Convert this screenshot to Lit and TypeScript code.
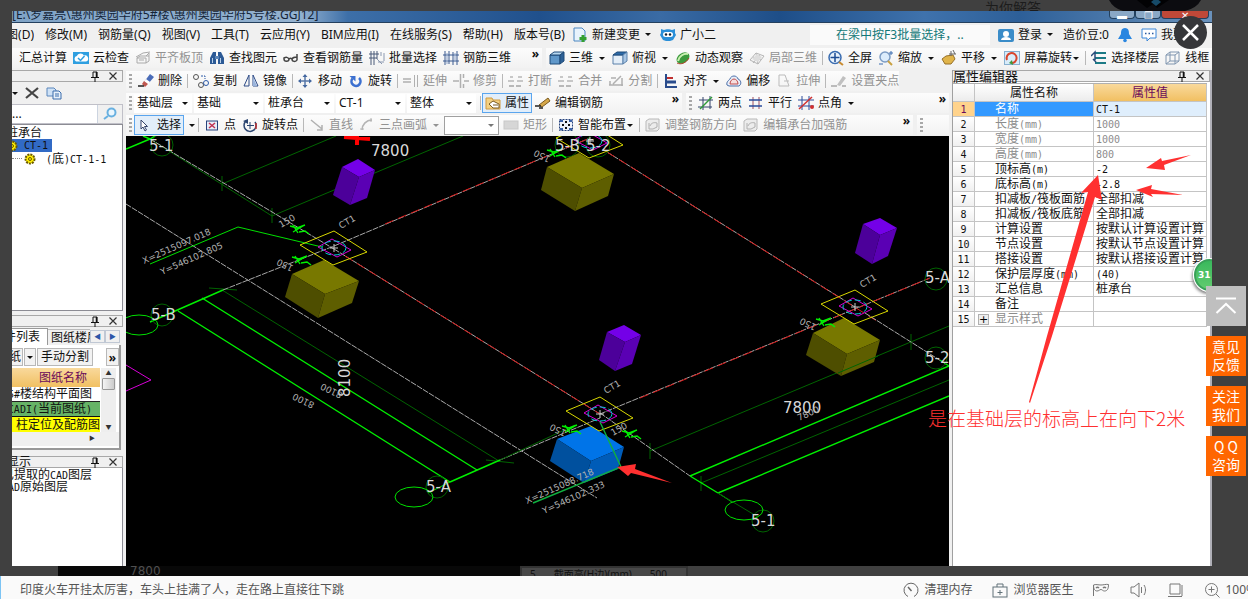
import { LitElement, html, svg, css } from "lit";
import { customElement } from "lit/decorators.js";
import { classMap } from "lit/directives/class-map.js";

const base = css`
  * { box-sizing: border-box; }
  button, select, input {
    font: inherit; color: inherit; margin: 0; padding: 0; border: 0;
    background: none; border-radius: 0; appearance: none; outline: none;
  }
  .mono { font-family: "DejaVu Sans Mono", "Liberation Mono", monospace; font-size: 10px; line-height: 0; }
  .ico { width: 16px; height: 16px; flex: none; display: block; fill: none; }
`;

/* Latin runs are set in a narrow monospace face, CJK runs stay in the UI face. */
const mixed = (t: string) =>
  t.split(/([\x20-\x7e]+)/).filter(Boolean).map((p) =>
    /^[\x20-\x7e]/.test(p) ? html`<span class="mono">${p}</span>` : p);

const glyphs: Record<string, unknown> = {
  cloudcheck: svg`<rect x="0" y="2" width="16" height="12" fill="#2f9fe0"/><path d="M3 11.500a3 3 0 0 1 .8-5.500 4 4 0 0 1 7.200-.500 3 3 0 0 1 2 6z" fill="#fff"/><path d="M5 8l2.500 2.500L11.500 6" stroke="#2f9fe0" stroke-width="1.500"/>`,
  level: svg`<path d="M1 7l7-4 7-1M2 13V8h9v5zM4 10h5M11 6l3-3v8l-3 2M2 8l3-2h9" stroke="#aaa"/>`,
  binoc: svg`<path d="M4 2h3v12H1V8zM9 2h3l3 6v6H9z" fill="#2c5a96"/><rect x="6" y="6" width="4" height="3" fill="#5d86b8"/><path d="M3.500 8v5M11.500 8v5" stroke="#b8d0ea"/>`,
  glasses: svg`<path d="M1 8c2-1 4-1 5 1 0 3-5 3-5 0zM9 9c1-2 3-2 5-2v3c-1 2-5 2-5-1zM6 9c1-1 2-1 3 0M14 7V4" stroke="#444" stroke-width="1.500"/>`,
  batch: svg`<path d="M2 1v14M5 1v14M8 1v8M0 4h10M0 8h8" stroke="#4a5a78"/><path d="M8 9l5 5M12 2v4M15 3v8M9 12h6" stroke="#8b98b0"/>`,
  rebar3d: svg`<path d="M2 1v14M6 1v13M10 2v13M14 1v14M0 5h16M0 11h16" stroke="#3a5a90"/><path d="M4 3v11M12 3v9" stroke="#8fa6cc"/>`,
  cube: svg`<path d="M1 5h10v9H1z" fill="#5f97c9" stroke="#1e4a78"/><path d="M1 5l4-3h10l-4 3z" fill="#b8d8f0" stroke="#1e4a78"/><path d="M11 5l4-3v9l-4 3z" fill="#2c6096" stroke="#1e4a78"/>`,
  cubetop: svg`<path d="M1 5h10v9H1z" fill="#e4eef8" stroke="#5a80aa"/><path d="M1 5l4-3h10l-4 3z" fill="#2c6aa8" stroke="#1e4a78"/><path d="M11 5l4-3v9l-4 3z" fill="#a8c6e4" stroke="#5a80aa"/>`,
  orbit: svg`<ellipse cx="8" cy="8" rx="7" ry="5" transform="rotate(-35 8 8)" fill="#3c9a3c"/><path d="M3 11C4 6 9 3 13 4" stroke="#c8f0b0" stroke-width="2"/><path d="M2 13c4 2 9 0 12-5" stroke="#b04028"/>`,
  orbitoff: svg`<path d="M1 10l6-7 8 3-6 8zM4 7l8 3M7 3l2 11M11 5l-7 8" stroke="#b5b5b5"/><path d="M3 9l5-5 5 3-4 5z" fill="#ddd"/>`,
  full: svg`<circle cx="7" cy="7.500" r="6" fill="#e8f2fc" stroke="#3a6cb0" stroke-width="1.500"/><path d="M7 3v9M2.500 7.500h9" stroke="#1d4c94" stroke-width="1.500"/><path d="M11 12l4 3" stroke="#c98b30" stroke-width="2"/>`,
  zoom: svg`<circle cx="7" cy="7" r="5" fill="#dcecfb" stroke="#7c9cc4" stroke-width="1.500"/><path d="M10 11l4 4" stroke="#c9a040" stroke-width="2"/><path d="M13 1v4M15 3h-4M1 14h4" stroke="#3a6cb0"/>`,
  hand: svg`<path d="M1 9l4-3 7-1 2 4-4 5H4z" fill="#e0b44a" stroke="#96702a"/><path d="M10 1v5M12 0l2 4M8 4h7" stroke="#666"/>`,
  spin: svg`<rect x=".5" y="1.500" width="15" height="13" fill="#d8ecfa" stroke="#88b0d0"/><path d="M3 10a5 5 0 1 1 4 3" stroke="#d8452c" stroke-width="2"/><path d="M8 10l-3 3 4 2z" fill="#3c9a3c"/>`,
  floors: svg`<path d="M4 3h11M4 8h11M4 13h11" stroke="#1c7a86" stroke-width="2"/><path d="M0 6l4-4v8M2 9l3 3" stroke="#2a4c7c" stroke-width="1.500"/>`,
  wire: svg`<path d="M1 5h9v9H1zM1 5l4-3h9l-4 3M10 14l4-3V2M5 2v9h9M5 11l-4 3" stroke="#8096b0"/>`,
  eraser: svg`<path d="M6 9l6-8 4 3-6 7z" fill="#4a6cb8"/><path d="M6 9l2-3 4 3-2 3z" fill="#fff"/><path d="M4 11l2-3 4 3-3 3z" fill="#c05850"/><path d="M0 13h6" stroke="#222" stroke-width="1.500"/>`,
  copy: svg`<circle cx="3" cy="4" r="2.500" stroke="#555"/><circle cx="8" cy="12" r="2.500" stroke="#555"/><circle cx="13" cy="10" r="2.500" stroke="#2c5aa8"/><path d="M8 3h4v3" stroke="#2c5aa8" stroke-dasharray="2 1"/>`,
  mirror: svg`<path d="M6 2v11H1zM10 2v11h5z" stroke="#2c4a86"/><path d="M10 4v9h4z" fill="#9ab4dc"/>`,
  move: svg`<path d="M7 2v12M1 8h12" stroke="#5878a8" stroke-width="1.500"/><path d="M7 1l2.500 3h-5zM7 15l2.500-3h-5zM0 8l3-2.500v5zM14 8l-3-2.500v5z" fill="#4468a0"/>`,
  rotate: svg`<path d="M4.500 5.500a4.500 4.500 0 1 0 6.500-.500" stroke="#3c70d0" stroke-width="2.600"/><path d="M1.500 3h6v5.500z" fill="#3c70d0"/>`,
  extend: svg`<path d="M0 6h8M0 9h8" stroke="#b0b0b0" stroke-width="1.500"/><path d="M11.500 2v12M14.500 2v12" stroke="#b0b0b0"/>`,
  trim: svg`<path d="M0 8h6M11 8h5M7.500 1v14M10.500 1v4M10.500 11v4" stroke="#b0b0b0" stroke-width="1.500"/>`,
  brk: svg`<path d="M2 4h3M10 4h4M0 8h6M9 8h6" stroke="#b8b8b8" stroke-width="1.500"/><path d="M1 13h14" stroke="#b8b8b8" stroke-width="2" stroke-dasharray="5 2"/>`,
  split: svg`<path d="M1 12h14M2 12V8M14 5v8M3 5h5M5 11l8-8" stroke="#b0b0b0" stroke-width="1.500"/>`,
  align: svg`<path d="M3 1v14M3 14h11" stroke="#2a4c8c" stroke-width="2"/><path d="M4 5h6" stroke="#c03030" stroke-width="2"/><path d="M4 9h9" stroke="#2a4c8c" stroke-width="3"/>`,
  offset: svg`<path d="M1 12c-1-3 2-5 3-6 1-4 7-4 8 0 3 1 4 5 1 7H3z" stroke="#4a6ea8" fill="#e8eef8"/><path d="M4 11c0-3 2-5 4-5s4 2 4 5z" stroke="#c04a4a" fill="#f6dede"/>`,
  stretch: svg`<path d="M3 2h6l4 11H3zM8 8h5" stroke="#bbb"/>`,
  grip: svg`<path d="M0 13h6M11 13h4" stroke="#bbb" stroke-width="2"/><path d="M6 12l6-9 3 2-6 8z" fill="#c0c0c0"/>`,
  props: svg`<path d="M1 3h6l1 2h7v9H1z" fill="#f4d080" stroke="#d09a40"/><path d="M4 9l4-3 6 3v4H8z" fill="#fff" stroke="#7a5a20"/><path d="M8 10h5" stroke="#7a5a20"/>`,
  pencil: svg`<path d="M4 10l9-7 2 3-8 6z" fill="#d6a84a" stroke="#7a5a20"/><path d="M0 11h6M4 13h4" stroke="#222" stroke-width="1.500"/>`,
  twopt: svg`<path d="M5 2v13M12 1v13M1 5h14M0 12h14" stroke="#34456c"/><path d="M2 14L14 2" stroke="#2f9a3a" stroke-width="1.500"/>`,
  para: svg`<path d="M5 2v12M11 2v12" stroke="#a05060"/><path d="M1 5h13M1 11h13" stroke="#2a4c9c" stroke-width="1.500"/>`,
  ptang: svg`<path d="M4 1v14M11 1v14M0 5h16M0 11h16" stroke="#2a4c9c"/><path d="M1 14L14 2" stroke="#d03030" stroke-width="1.500"/><circle cx="14" cy="12" r="2" fill="#d03030"/>`,
  cursor: svg`<path d="M4 3v9l2-2 2 4 1.500-1-2-3.500h3z" fill="#fff" stroke="#34456c"/>`,
  point: svg`<rect x="2.500" y="4" width="11" height="9" stroke="#26427c" fill="#e8ecf8"/><path d="M5 6l6 5M11 6l-6 5" stroke="#c03050" stroke-width="1.500"/>`,
  rotpt: svg`<path d="M4 4a6 6 0 1 0 9 1" stroke="#2a4470" stroke-width="1.500"/><path d="M8 5v7M5 8.500h7" stroke="#2a4470"/><path d="M1 4l5-2v5z" fill="#2a4470"/><path d="M14 6v6" stroke="#c03030" stroke-width="1.500"/>`,
  line: svg`<path d="M2 3l11 9M13 8v5H8" stroke="#b0b0b0" stroke-width="1.500"/>`,
  arc: svg`<path d="M3 13C3 8 7 3 13 3" stroke="#b4b4b4" stroke-width="1.500"/><path d="M1 12h4M12 1v4" stroke="#b4b4b4"/>`,
  rect: svg`<rect x="1" y="4" width="14" height="8" fill="#d6d6d6" stroke="#c8c8c8"/>`,
  smart: svg`<rect x="1.500" y="2.500" width="13" height="11" stroke="#26427c" stroke-dasharray="2 1" fill="#eef2fa"/><path d="M8 4v2M8 10v2M4 8h2M10 8h2" stroke="#111" stroke-width="2"/><path d="M2 3h3v2H2zM11 3h3v2h-3zM2 11h3v2H2zM11 11h3v2h-3z" fill="#3a62a8"/>`,
  adj: svg`<path d="M1 4l3-2h10v10l-2 2H1z" stroke="#b8b8b8" fill="#ececec"/><path d="M4 6v6h4M5 9c1-3 4-4 7-3v4l-4 2" stroke="#b0b0b0"/>`,
  newdoc: svg`<path d="M2 1h8l3 3v10H2z" fill="#e8f3fc" stroke="#4a86c0"/><path d="M11 8v7M7.500 11.500h7" stroke="#34a030" stroke-width="3"/>`,
  robot: svg`<path d="M1 6V2l3 1c2-1 6-1 8 0l3-1v4l1 2-3 5-3 1H6l-3-1L0 8z" fill="#2a8fd8"/><rect x="3" y="5" width="10" height="5" rx="2.500" fill="#fff"/><circle cx="6" cy="7.500" r="1.200" fill="#123"/><circle cx="10" cy="7.500" r="1.200" fill="#123"/>`,
  user: svg`<rect x="0" y="2" width="16" height="13" rx="2" fill="#3a8cc8"/><circle cx="8" cy="7" r="3" fill="#fff"/><path d="M3 13c0-4 10-4 10 0z" fill="#fff"/>`,
  bell: svg`<path d="M8 1c4 0 4 4 4 6l3 5H1l3-5c0-2 0-6 4-6z" fill="#2a86e0"/><circle cx="8" cy="13.500" r="1.800" fill="#2a86e0"/>`,
  chat: svg`<path d="M1 2h14v9H9l-3 3v-3H1z" stroke="#3a86d8" fill="#fff"/><path d="M4 6.500h1.500M7.500 6.500h1.500M11 6.500h1.500" stroke="#2a5aa0" stroke-width="1.500"/>`,
  del: svg`<path d="M2 3l12 10M14 3L2 13" stroke="#444" stroke-width="2.200"/>`,
  docs: svg`<path d="M1 3h7l2 2v6H1z" fill="#cfe2f6" stroke="#5a86bc"/><path d="M7 6h6l2 2v6H7z" fill="#e6f0fa" stroke="#3a6cac"/><path d="M9 9h4M9 11h4" stroke="#3a6cac"/>`,
  lens: svg`<circle cx="9.500" cy="6.500" r="4" stroke="#68b0e0" stroke-width="2" fill="#eaf6fe"/><path d="M6 10l-4 3" stroke="#68b0e0" stroke-width="2"/>`,
  gear: svg`<circle cx="8" cy="8" r="4.500" fill="#ffee00" stroke="#6a5a00" stroke-width="2" stroke-dasharray="2 1"/><circle cx="8" cy="8" r="1.500" stroke="#6a5a00"/>`,
  pin: svg`<path d="M6 4h4v5M6 4v5M4 9.500h8M8 10v4" stroke="#111"/><path d="M9.500 4v5" stroke="#111" stroke-width="1.500"/>`,
  shut: svg`<path d="M4.500 4.500l7 7M11.500 4.500l-7 7" stroke="#333" stroke-width="1.200"/>`,
  gauge: svg`<path d="M5 14.500A7 7 0 1 1 11 14.500" stroke="#666"/><path d="M5 5l3.500 4" stroke="#666" stroke-width="1.500"/>`,
  kit: svg`<rect x="1" y="5" width="14" height="10" stroke="#607078"/><path d="M5 5V2h6v3M8 8v5M5.500 10.500h5" stroke="#607078"/>`,
  mask: svg`<path d="M.5 14V3c2-1 5 0 7.500 0s5-1 7.500-.500c0 4-1 6.500-4 6.500-2 0-2-1.500-3.500-1.500S6 9 4 9C2 9 .5 7 .5 3" stroke="#777"/><path d="M3 6c1-1 2-1 3 0M10 6c1-1 2-1 3 0" stroke="#777" stroke-width="1.500"/>`,
  sound: svg`<path d="M1 5h3l5-4v14l-5-4H1zM11.500 5v6M14 3c2 3 2 7 0 10" stroke="#777"/>`,
  screen: svg`<path d="M3 2h10v10H3zM1 14.500h14M15 3v11" stroke="#777"/>`,
  plus: svg`<circle cx="7.500" cy="7.500" r="6" stroke="#777"/><path d="M7.500 4.500v6M4.500 7.500h6M12 12l3.500 3.500" stroke="#777"/>`,
};

const icon = (n: string) => html`<svg class="ico" viewBox="0 0 16 16" aria-hidden="true">${glyphs[n]}</svg>`;

type Opt = { off?: boolean; drop?: boolean; on?: boolean; tight?: boolean; name?: string };
const tool = (i: string, label: string, o: Opt = {}) => html`
  <button class=${classMap({ tool: true, off: !!o.off, on: !!o.on, tight: !!o.tight })} ?disabled=${o.off} aria-label=${label || o.name || ""}>
    ${i ? icon(i) : ""}${label ? html`<span>${label}</span>` : ""}${o.drop ? html`<i class="tri"></i>` : ""}
  </button>`;
const sep = html`<i class="sep"></i>`;
const grip = html`<i class="grip"></i>`;
const more = html`<button class="more" aria-label="更多">»</button>`;
const combo = (v: string, cls = "") => html`
  <label class="combo ${cls}"><select aria-label=${v || "图元"}><option>${v}</option></select></label>`;
const caption = (t: string) => html`
  <header class="cap"><span class="captext">${t}</span>
    <button aria-label="固定">${icon("pin")}</button><button aria-label="关闭">${icon("shut")}</button></header>`;

const capCss = css`
  .cap { display: flex; align-items: center; justify-content: flex-end; height: 12px; gap: 2px; border: 1px solid #a8a8a8; border-left: 0; background: #f0f0f0; padding-right: 1px; line-height: 12px; white-space: nowrap; }
  .captext { flex: 1; }
`;

type P = [number, number];
const pts = (a: P[]) => a.map((p) => p.join(",")).join(" ");

@customElement("cad-scene")
export class CadScene extends LitElement {
  static styles = [base, css`
    :host { display: block; flex: 1; min-height: 0; background: #000; overflow: hidden; }
    .scene { display: block; width: 100%; height: 100%; fill: none; }
    .g { stroke: #00f000; stroke-width: 1.400; }
    .t { stroke: #00e000; }
    .d { stroke: #006400; }
    .w { stroke: #a8a8a8; stroke-dasharray: 6 1; }
    .r { stroke: #d81818; stroke-dasharray: 9 5; }
    .y { stroke: #d8d800; }
    .m { stroke: #d800d8; }
    .c { stroke: #00d0d8; stroke-dasharray: 6 3; }
    .lab { font: 15px "DejaVu Sans", sans-serif; fill: #d8d8d8; }
    .sm { font: 9px "DejaVu Sans", sans-serif; fill: #b0b0b0; }
  `];
  box(a: P, b: P, c: P, d: P, e: P, f: P, g: P, k: string[]) {
    return svg`<polygon points=${pts([a, b, c, d])} fill=${k[0]}/><polygon points=${pts([a, d, f, e])} fill=${k[1]}/><polygon points=${pts([d, c, g, f])} fill=${k[2]}/>`;
  }
  node(x: number, y: number) {
    return svg`<g transform="translate(${x} ${y})"><path class="y" d="M-34-3L0-17 33 4-1 17z"/><path class="m" d="M-16-1L-2-9 17 2 3 9z"/><ellipse class="c" cx="0" cy="0" rx="12" ry="7"/><path d="M-4 0h8M0-4v8" stroke="#ccc"/></g>`;
  }
  tick(x: number, y: number) {
    return svg`<path class="g" transform="translate(${x} ${y})" d="M-8-3l7 2 8-3M-5-4l5 8M-5 3l10-6M1 3l6-1 4 3"/>`;
  }
  render() {
    const ol = ["#787800", "#4e4e00", "#5e5e00"];
    const pu = ["#7400e8", "#4c009a", "#5a00b4"];
    return html`<svg class="scene" viewBox="126 136 823 430" preserveAspectRatio="xMidYMid slice" role="img" aria-label="三维视图">
      <path class="d" d="M222 184L336 136M222 176v15M272 216L463 136M272 208v15M222 290L499 461M209 288l28 2M486 460l28 3M650 451L949 326M650 443v16M701 483L949 380M701 476v15M911 334v16M150 139L272 216"/>
      <path class="w" d="M150 139L334 249M126 204L597 498M223 290L334 246M500 460L600 418M600 413L690 476M334 246L590 138M334 249L600 414M600 414L930 278M607 152L855 307"/>
      <path class="r" d="M385 224L590 138M345 256L600 414M640 398L930 278M607 152L880 323"/>
      <path class="w" d="M865 313L949 366"/>
      <path class="g" d="M126 149l24-10 5-3M143 136l7 3M150 322L223 290M178 311L450 482M202 298L477 470M450 482L500 460M690 476L949 366M718 493L949 396M690 476l28 17M940 360l9 6"/>
      <path class="t" d="M428 493l22-11M718 493l14 9M150 264l88-37 84 20"/>
      <path class="d" d="M718 493l40 24M500 460l75-35"/>
      <g class="d"><circle cx="162" cy="145" r="11"/><circle cx="162" cy="315" r="11"/><circle cx="437" cy="487" r="11"/><circle cx="763" cy="521" r="11"/><circle cx="936" cy="279" r="11"/><circle cx="936" cy="358" r="11"/><circle cx="567" cy="145" r="12"/><circle cx="598" cy="145" r="12"/></g>
      <g class="t"><ellipse cx="139" cy="325" rx="19" ry="10"/><ellipse cx="414" cy="497" rx="19" ry="10"/><ellipse cx="744" cy="510" rx="19" ry="10"/></g>
      <path class="m" d="M126 365l25 15-25 11"/>
      <path d="M344 137l26 2M357 136v9" stroke="#f00" stroke-width="4"/>
      ${this.box([342, 167], [358, 159], [375, 170], [359, 177], [333, 195], [350, 205], [367, 198], pu)}
      ${this.box([863, 224], [880, 218], [897, 228], [880, 235], [855, 253], [872, 264], [888, 256], pu)}
      ${this.box([607, 332], [624, 325], [641, 335], [625, 342], [599, 360], [615, 371], [632, 364], pu)}
      ${this.box([292, 274], [324, 260], [359, 281], [325, 294], [285, 297], [318, 318], [352, 303], ol)}
      ${this.box([547, 167], [579, 153], [614, 174], [582, 188], [541, 190], [575, 211], [608, 196], ol)}
      ${this.box([813, 333], [844, 318], [880, 340], [847, 354], [806, 355], [841, 376], [874, 362], ol)}
      ${this.box([557, 439], [591, 426], [624, 447], [591, 461], [550, 461], [584, 483], [618, 469], ["#0074e8", "#00509e", "#005cb8"])}
      <path class="d" d="M838 373l40-17"/>
      ${this.node(334, 248)}${this.node(590, 141)}${this.node(600, 414)}${this.node(855, 307)}
      ${this.tick(298, 229)}${this.tick(300, 260)}${this.tick(555, 153)}${this.tick(824, 322)}${this.tick(570, 429)}${this.tick(630, 434)}
      <path d="M600 422l21 45-88 36" stroke="#10b040" stroke-width="1.400"/>
      <g class="lab">
        <text x="149" y="151">5-1</text><text x="151" y="320">5-B</text><text x="426" y="492">5-A</text><text x="751" y="526">5-1</text>
        <text x="925" y="283">5-A</text><text x="925" y="363">5-2</text><text x="555" y="151">5-B</text><text x="586" y="151">5-2</text>
        <text x="371" y="156">7800</text><text x="783" y="413">7800</text><text transform="translate(350 397) rotate(-90)">8100</text>
      </g>
      <g class="sm">
        <text transform="translate(144 264) rotate(-24)">X=2515097.018</text><text transform="translate(162 275) rotate(-24)">Y=546102.805</text>
        <text transform="translate(527 504) rotate(-24)">X=2515088.718</text><text transform="translate(544 514) rotate(-24)">Y=546102.333</text>
        <text transform="translate(341 229) rotate(-30)">CT1</text><text transform="translate(606 394) rotate(-30)">CT1</text><text transform="translate(862 288) rotate(-30)">CT1</text>
        <text transform="translate(281 228) rotate(-30)">150</text><text transform="translate(294 266) rotate(206)">150</text><text transform="translate(551 157) rotate(206)">150</text>
        <text transform="translate(817 325) rotate(206)">150</text><text transform="translate(567 431) rotate(206)">150</text><text transform="translate(613 436) rotate(-30)">150</text>
        <text transform="translate(799 421) rotate(-24)">7800</text><text transform="translate(343 393) rotate(206)">8100</text><text transform="translate(315 403) rotate(206)">8100</text>
      </g>
    </svg>`;
  }
}

const rows: [string, string, boolean][] = [
  ["名称", "CT-1", false], ["长度(mm)", "1000", true], ["宽度(mm)", "1000", true], ["高度(mm)", "800", true],
  ["顶标高(m)", "-2", false], ["底标高(m)", "-2.8", false], ["扣减板/筏板面筋", "全部扣减", false], ["扣减板/筏板底筋", "全部扣减", false],
  ["计算设置", "按默认计算设置计算", false], ["节点设置", "按默认节点设置计算", false], ["搭接设置", "按默认搭接设置计算", false],
  ["保护层厚度(mm)", "(40)", false], ["汇总信息", "桩承台", false], ["备注", "", false], ["显示样式", "", true],
];

@customElement("property-editor")
export class PropertyEditor extends LitElement {
  static styles = [base, capCss, css`
    :host { display: block; background: #fff; border-left: 1px solid #a0a0a0; border-right: 2px solid #b0b0b8; overflow: hidden; }
    .captext { font-size: 13px; }
    .grid { width: 100%; border-collapse: separate; border-spacing: 0; table-layout: fixed; border-top: 1px solid #b0b0b0; }
    .grid th, .grid td { height: 15px; padding: 0; line-height: 14px; font-weight: 400; border-right: 1px solid #c4c4c4; border-bottom: 1px solid #c4c4c4; overflow: hidden; white-space: nowrap; text-align: left; }
    .grid thead th { height: 18px; line-height: 17px; text-align: center; background: linear-gradient(#fff, #ececec); }
    .grid thead .hot { background: linear-gradient(#f9d99c, #f1c062); color: #6a0a5a; }
    .grid .no { text-align: center; background: linear-gradient(#fff, #f0f0f0); }
    .grid td.name { padding-left: 20px; }
    .grid td.val { padding-left: 2px; }
    .dim .name, .dim .val { color: #8c8c8c; }
    .grid .sel .no { background: #ffd38c; color: #6a0a5a; }
    .sel .name { background: #3399ff; color: #fff; }
    .sel .val { background: #dfeefc; }
    .exp { position: absolute; margin: 2px 0 0 -17px; width: 11px; height: 11px; border: 1px solid #b0b0b0; background: #eee; font: 11px/8px "DejaVu Sans", sans-serif; color: #000; }
    .c1 { width: 22px; } .c2 { width: 119px; }
    .wrap { padding: 1px 3px 0 0; }
  `];
  render() {
    return html`${caption("属性编辑器")}
      <div class="wrap"><table class="grid">
        <colgroup><col class="c1" /><col class="c2" /><col /></colgroup>
        <thead><tr><th></th><th>属性名称</th><th class="hot">属性值</th></tr></thead>
        <tbody>${rows.map(([n, v, dim], i) => html`<tr class=${classMap({ dim, sel: i === 0 })}>
          <th class="no" scope="row">${mixed(String(i + 1))}</th>
          <td class="name">${i === 14 ? html`<button class="exp" aria-label="展开">+</button>` : ""}${mixed(n)}</td>
          <td class="val">${mixed(v)}</td></tr>`)}</tbody>
      </table></div>`;
  }
}

@customElement("app-root")
export class AppRoot extends LitElement {
  static styles = [base, capCss, css`
    :host { display: flex; flex-direction: column; height: 100vh; overflow: hidden; font: 12px/16px "Noto Sans", "Noto Sans CJK SC", sans-serif; color: #111; background: #404040; position: relative; }
    .stage { flex: 1; min-height: 0; display: flex; flex-direction: column; padding: 0 36px 0 12px; }
    .behind { height: 11px; display: flex; justify-content: flex-end; gap: 68px; padding-right: 11px; overflow: hidden; color: #1c1c1c; font-size: 14px; line-height: 16px; }
    .figure { width: 92px; height: 11px; display: block; }
    .under { height: 10px; display: flex; overflow: hidden; margin-right: -36px; }
    .under .cadstrip { margin-left: 46px; flex: 0 0 462px; background: #080808; color: #505050; font: 12px/10px "DejaVu Sans", sans-serif; padding-left: 72px; }
    .under .rowstrip { flex: 0 0 168px; display: flex; gap: 18px; padding-left: 8px; border: 2px solid #333; border-bottom: 0; background: #484848; color: #111; font-size: 10px; line-height: 12px; white-space: nowrap; overflow: hidden; }
    .shot { flex: 1; min-height: 0; display: flex; flex-direction: column; background: #f0f0f0; position: relative; overflow: hidden; }

    .title { flex: none; height: 12px; display: flex; align-items: flex-end; white-space: nowrap; overflow: hidden; color: #142438; line-height: 14px;
      background: linear-gradient(90deg, #7fa3c6 0, #94b2d0 24%, #3d6fa8 28%, #20508c 44%, #3a6ba4 54%, #1e4e88 64%, #3f72ac 76%, #2d5f98 84%, #6a92bc 100%); border-bottom: 1px solid #24405e; }
    .title h1 { margin: 0; font: inherit; flex: 1; }
    .wb { align-self: flex-start; height: 8px; width: 26px; border: 1px solid #22405e; border-top: 0; border-radius: 0 0 4px 4px; background: #8aa8c6; color: #fff; font-size: 10px; line-height: 4px; }
    .wb.red { width: 48px; background: #c04838; margin-right: 3px; }

    .menu { flex: none; height: 23px; display: flex; align-items: center; gap: 11px; white-space: nowrap; overflow: hidden; background: #f0f0f0; }
    .menu .first { width: 22px; display: flex; justify-content: flex-end; overflow: hidden; }
    .menu > .tool { margin-left: -4px; }
    .hint { margin-left: auto; width: 180px; height: 20px; line-height: 20px; text-align: center; background: #fafafa; color: #127878; }
    .acct { display: flex; gap: 8px; padding-right: 15px; margin-left: -3px; }

    .bar { flex: none; display: flex; align-items: center; height: 22px; white-space: nowrap; overflow: hidden; }
    .bar.top { height: 24px; }
    .group { display: flex; align-items: center; gap: 6px; height: 20px; background: linear-gradient(#fcfcfc, #f2f2f2); padding-left: 3px; margin-right: 4px; }
    .grow { flex: 0 0 530px; padding-left: 7px; }
    .tool { display: flex; align-items: center; gap: 4px; height: 20px; flex: none; white-space: nowrap; }
    .tool.off { color: #929292; }
    .tool.on { border: 1px solid #5aa5ee; background: #e2eefa; padding: 0 2px; margin: 0 -3px 0 -4px; }
    .tri { width: 9px; display: flex; justify-content: center; }
    .tri::after, .combo::after { content: ""; border: 3px solid transparent; border-top-color: currentColor; border-bottom: 0; }
    .tight .tri { margin-left: -5px; }
    .group > .tri { margin-right: -3px; }
    .sep { width: 1px; height: 14px; background: #b8b8b8; margin: 0 -1px; flex: none; }
    .grip { width: 3px; height: 14px; background: repeating-linear-gradient(#a8a8a8 0 2px, transparent 2px 4px); flex: none; }
    .more { font: bold 12px/12px "Noto Sans", sans-serif; align-self: flex-start; margin-left: auto; padding-right: 3px; }
    .combo { display: grid; align-items: center; width: 69px; height: 19px; background: #fff; flex: none; margin-right: -4px; }
    .combo > select, .combo::after { grid-area: 1 / 1; }
    .combo > select { width: 100%; padding-left: 3px; }
    .combo::after { justify-self: end; margin-right: 4px; }
    .combo.short { width: 58px; margin-left: -4px; }
    .combo.last { margin-right: -1px; }
    .combo.boxed { width: 55px; border: 1px solid #a0a0a0; color: #777; margin: 0 -2px; }
    .w550 { flex: 0 0 556px; }
    .w788 { flex: 0 0 787px; }
    .fill { flex: 1; margin-right: 0; }

    .body { flex: 1; min-height: 0; display: grid; grid-template-columns: 111px minmax(0, 1fr) 260px; column-gap: 3px; }
    .mid { display: flex; flex-direction: column; min-width: 0; min-height: 0; }
    .left { display: flex; flex-direction: column; min-width: 0; min-height: 0; overflow: hidden; }
    .mini { display: flex; align-items: center; gap: 6px; height: 22px; flex: none; }
    .mini .tri { width: 6px; }
    .search { display: flex; height: 20px; flex: none; border: 1px solid #c0c0c8; border-width: 1px 1px 1px 0; }
    .search input { flex: 1; min-width: 0; background: #fff; border-right: 1px solid #ccd4e0; }
    .search button { width: 24px; padding-left: 4px; }
    .tree { list-style: none; margin: 0 0 4px; padding: 1px 0; height: 187px; flex: none; background: #fff; border: 1px solid #8c8c94; border-left: 0; white-space: nowrap; overflow: hidden; }
    .tree li { height: 13px; line-height: 13px; display: flex; align-items: center; }
    .tree .root { margin-left: -6px; }
    .tree .sel { width: 41px; background: #316ac5; margin-left: -1px; gap: 4px; }
    .tree .sel .ico { margin-left: -7px; }
    .tree .leaf { gap: 8px; }
    .tree .leaf::before { content: ""; width: 10px; border-top: 1px dotted #888; margin-right: -8px; }
    .tabs { display: flex; height: 18px; flex: none; align-items: flex-end; white-space: nowrap; }
    .tabs button { height: 16px; line-height: 15px; overflow: hidden; display: flex; }
    .tabs .cur { width: 36px; height: 17px; justify-content: flex-end; padding-right: 7px; background: #fff; border: 1px solid #999; border-width: 1px 1px 0 0; }
    .tabs .next { width: 42px; padding-left: 3px; border-top: 1px solid #bbb; }
    .tabs .nav { width: 15px; height: 13px; line-height: 11px; font-size: 7px; color: #2c56a8; border: 1px solid #c0c8d4; justify-content: center; margin-bottom: 2px; }
    .sheet { border: 1px solid #999; border-width: 0 2px 2px 0; margin: 0 2px 6px 0; height: 105px; flex: none; background: #fff; overflow: hidden; }
    .btns { display: flex; height: 22px; gap: 1px; padding: 3px 0 0; white-space: nowrap; }
    .btns button { height: 18px; border: 1px solid #b8b8b8; background: #f2f2f2; padding: 0 3px; line-height: 16px; }
    .btns .cut { width: 11px; display: flex; justify-content: flex-end; overflow: hidden; border-left: 0; padding: 0 1px 0 0; }
    .btns .pull { padding: 0 1px; width: 12px; }
    .btns .tri { width: 8px; }
    .btns .more { margin-left: auto; height: 18px; line-height: 9px; padding: 0 2px; }
    .list { display: flex; margin-top: 1px; }
    .dwg { width: 88px; border-spacing: 0; table-layout: fixed; }
    .dwg th, .dwg td { padding: 0; height: 15px; line-height: 14px; overflow: hidden; white-space: nowrap; border-bottom: 1px solid #222; }
    .dwg th { height: 19px; font-weight: 400; color: #6a0a5a; background: linear-gradient(#f9d99c, #f1c062); padding-left: 14px; border: 0; }
    .dwg div { display: flex; justify-content: flex-end; padding-right: 8px; }
    .dwg .grn { background: #66b366; border-color: #111; }
    .dwg .yel { background: #ffff00; border: 0; }
    .dwg .yel div { padding: 0; }
    .scroll { width: 15px; margin-left: 1px; background: #eee; display: flex; flex-direction: column; align-items: center; font-size: 6px; line-height: 10px; color: #333; }
    .thumb { width: 13px; height: 12px; background: linear-gradient(90deg, #f4f4f4, #ccc); border: 1px solid #999; border-radius: 1px; }
    .scroll .dn { margin-top: auto; }
    .hs { height: 14px; background: #f0f0f0; font-size: 6px; line-height: 12px; padding-left: 77px; color: #333; }
    .layers { flex: 1; min-height: 0; margin: 0; padding: 1px 0; list-style: none; background: #fff; border-right: 1px solid #8c8c94; white-space: nowrap; overflow: hidden; line-height: 12px; }
    .layers li { margin-left: -10px; }
    .show .captext { margin-left: -5px; }

    .notes { position: absolute; inset: 0; width: 100%; height: 100%; pointer-events: none; fill: #ff3030; }
    .notetext { font: 300 19px "Noto Sans CJK SC", sans-serif; }
    .badge { position: absolute; right: -14px; top: 247px; width: 33px; height: 34px; border-radius: 50%; border: 2px solid #fff; background: linear-gradient(#38b85c, #64cc70); outline: 2px solid #38a058; outline-offset: -3px; color: #fff; font: bold 9px/30px "DejaVu Sans", sans-serif; text-align: left; padding-left: 3px; box-shadow: -1px 2px 3px #888; }
    .close { position: absolute; right: 41px; top: 16px; width: 33px; height: 33px; border-radius: 50%; background: #36373a; }
    .close svg { display: block; width: 33px; height: 33px; fill: none; }
    .side { position: absolute; right: 2px; top: 286px; display: flex; flex-direction: column; gap: 10px; }
    .side a { width: 40px; height: 40px; background: #ff6600; color: #fff; font: 14px/18px "Noto Sans CJK SC", sans-serif; text-align: center; padding: 1px 4px; text-decoration: none; }
    .side .up { background: #bfbfbf; padding: 0; }
    .side svg { display: block; width: 40px; height: 40px; fill: none; }

    .foot { flex: none; height: 23px; background: #fafafa; color: #555; display: flex; align-items: center; overflow: hidden; white-space: nowrap; padding-top: 4px; border-left: 1px solid #7cc4f4; }
    .foot a { color: inherit; text-decoration: none; margin-left: 19px; margin-right: auto; }
    .foot nav { display: flex; gap: 20px; margin-right: -8px; }
    .foot button { display: flex; align-items: center; gap: 4px; }
    .foot .ico { margin-right: 1px; }
  `];

  render() {
    const off = { off: true };
    return html`
    <main class="stage">
      <div class="behind"><span>为你解答</span>
        <svg class="figure" viewBox="0 0 92 11"><path d="M0 0h92q-4 8-16 11H14Q4 8 0 0z" fill="#0c0c10"/><path d="M28 0l10 8 6-4 4 4 12-8z" fill="#020204"/><path d="M42 2l5-4 5 4-5 4z" fill="#164a68"/></svg></div>
      <section class="shot">
        <div class="title"><h1>[E:\\罗嘉亮\\惠州奥园华府5#楼\\惠州奥园华府5号楼.GGJ12]</h1>
          <button class="wb" aria-label="最小化">▬</button><button class="wb" aria-label="还原">❐</button><button class="wb red" aria-label="退出">✕</button></div>
        <nav class="menu">
          <button class="first">绘图(D)</button>
          ${["修改(M)", "钢筋量(Q)", "视图(V)", "工具(T)", "云应用(Y)", "BIM应用(I)", "在线服务(S)", "帮助(H)", "版本号(B)"].map((m) => html`<button>${m}</button>`)}
          ${tool("newdoc", "新建变更", { drop: true })}${tool("robot", "广小二")}
          <span class="hint">在梁中按F3批量选择，..</span>
          <span class="acct">${tool("user", "登录", { drop: true })}<button>造价豆:0</button>${tool("bell", "", { name: "通知" })}${tool("chat", "我要提")}</span>
        </nav>
        <div class="bar top">
          <div class="group grow">${tool("", "汇总计算")}${tool("cloudcheck", "云检查")}${tool("level", "平齐板顶", off)}${tool("binoc", "查找图元")}${tool("glasses", "查看钢筋量")}${tool("batch", "批量选择")}${tool("rebar3d", "钢筋三维")}${more}</div>
          <div class="group fill">${tool("cube", "三维", { drop: true })}${tool("cubetop", "俯视", { drop: true })}${tool("orbit", "动态观察")}${tool("orbitoff", "局部三维", off)}${sep}${tool("full", "全屏")}${tool("zoom", "缩放", { drop: true })}${tool("hand", "平移", { drop: true })}${tool("spin", "屏幕旋转", { drop: true, tight: true })}${sep}${tool("floors", "选择楼层")}${tool("wire", "线框")}</div>
        </div>
        <div class="body">
          <aside class="left">
            ${caption("")}
            <div class="mini"><i class="tri"></i><button aria-label="删除">${icon("del")}</button><button aria-label="复制">${icon("docs")}</button></div>
            <div class="search"><input aria-label="搜索" value="..." /><button aria-label="查找">${icon("lens")}</button></div>
            <ul class="tree"><li class="root">桩承台</li><li class="sel">${icon("gear")}${mixed("CT-1")}</li><li class="leaf">${icon("gear")}<span>${mixed("(底)CT-1-1")}</span></li></ul>
            ${caption("")}
            <div class="tabs"><button class="cur">图纸文件列表</button><button class="next">图纸楼层</button><button class="nav" aria-label="左">◀</button><button class="nav" aria-label="右">▶</button></div>
            <div class="sheet">
              <div class="btns"><button class="cut">图纸</button><button class="pull" aria-label="展开"><i class="tri"></i></button><button>手动分割</button>${more}</div>
              <div class="list"><table class="dwg"><thead><tr><th>图纸名称</th></tr></thead><tbody>
                <tr><td><div><span>${mixed("5#楼结构平面图")}</span></div></td></tr>
                <tr><td class="grn"><div><span>${mixed("CADI(当前图纸)")}</span></div></td></tr>
                <tr><td class="yel"><div>柱定位及配筋图</div></td></tr></tbody></table>
                <div class="scroll"><span>▲</span><i class="thumb"></i><span class="dn">▼</span></div></div>
              <div class="hs">▶</div>
            </div>
            <div class="show">${caption("显示")}</div>
            <ul class="layers"><li>${mixed("已提取的CAD图层")}</li><li>${mixed("CAD原始图层")}</li></ul>
          </aside>
          <div class="mid">
            <div class="bar"><div class="group">${grip}${tool("eraser", "删除")}${sep}${tool("copy", "复制")}${tool("mirror", "镜像")}${sep}${tool("move", "移动")}${tool("rotate", "旋转")}${sep}${tool("extend", "延伸", off)}${tool("trim", "修剪", off)}${sep}${tool("brk", "打断", off)}${tool("brk", "合并", off)}${tool("split", "分割", off)}${sep}${tool("align", "对齐", { drop: true })}${tool("offset", "偏移")}${tool("stretch", "拉伸", off)}${sep}${tool("grip", "设置夹点", off)}</div></div>
            <div class="bar">
              <div class="group w550">${grip}${combo("基础层", "short")}${combo("基础")}${combo("桩承台")}${combo("CT-1")}${combo("整体", "last")}${sep}${tool("props", "属性", { on: true })}${tool("pencil", "编辑钢筋")}${more}</div>
              <div class="group fill">${grip}${tool("twopt", "两点")}${tool("para", "平行")}${tool("ptang", "点角", { drop: true })}${more}</div></div>
            <div class="bar">
              <div class="group w788">${grip}${tool("cursor", "选择", { on: true })}<i class="tri"></i>${sep}${tool("point", "点")}${tool("rotpt", "旋转点")}${sep}${tool("line", "直线", off)}${tool("arc", "三点画弧", { off: true, drop: true })}${combo("", "boxed")}${tool("rect", "矩形", off)}${sep}${tool("smart", "智能布置", { drop: true, tight: true })}${sep}${tool("adj", "调整钢筋方向", off)}${tool("adj", "编辑承台加强筋", off)}${more}</div>
              <div class="group fill">${grip}</div></div>
            <cad-scene></cad-scene>
          </div>
          <property-editor></property-editor>
        </div>
        <svg class="notes" viewBox="12 11 1200 555" preserveAspectRatio="xMaxYMin slice">
          <path d="M617 467L636 464 635 469 672 483 631 473 628 476z"/>
          <path d="M1146 168L1161 158 1162 161 1191 155 1164 165 1165 170z"/>
          <path d="M1136 190L1152 185 1151 189 1183 195 1151 194 1153 197z"/>
          <path d="M1098 175L1102 200 1095 197 1052 336 1030 403 1029 402 1047 336 1088 192 1081 193z"/>
          <text class="notetext" x="928" y="426">是在基础层的标高上在向下2米</text>
        </svg>
        <button class="badge">31</button>
      </section>
      <div class="under"><span class="cadstrip">7800</span><span class="rowstrip"><span>5</span><span>截面高(H边)(mm)</span><span>500</span></span></div>
    </main>
    <button class="close" aria-label="关闭图片"><svg viewBox="0 0 33 33"><path d="M9 9l15 15M24 9L9 24" stroke="#fff" stroke-width="2.500"/></svg></button>
    <nav class="side">
      <a class="up" href="#top" aria-label="返回顶部"><svg viewBox="0 0 40 40"><path d="M10 12.500h20M10.500 27L20 18l9.500 9" stroke="#fff" stroke-width="2"/></svg></a>
      <a href="#feedback">意见反馈</a><a href="#follow">关注我们</a><a href="#qq">Q Q咨询</a>
    </nav>
    <footer class="foot"><a href="#news">印度火车开挂太厉害，车头上挂满了人，走在路上直接往下跳</a>
      <nav><button>${icon("gauge")}清理内存</button><button>${icon("kit")}浏览器医生</button><button aria-label="隐私">${icon("mask")}</button><button aria-label="声音">${icon("sound")}</button><button aria-label="窗口">${icon("screen")}</button><button>${icon("plus")}100%</button></nav></footer>`;
  }
}
